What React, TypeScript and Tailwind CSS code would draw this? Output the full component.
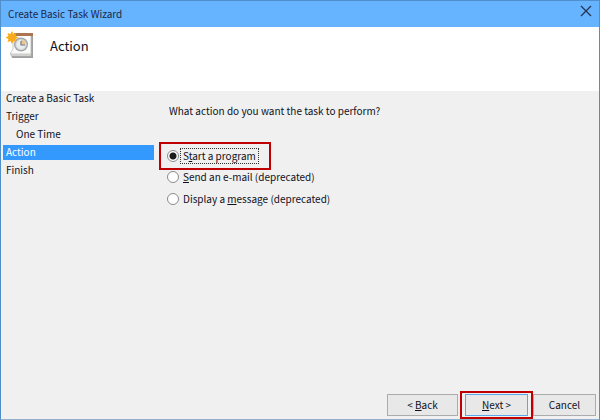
import { useState } from "react";

const steps = [
  { label: "Create a Basic Task", indent: false },
  { label: "Trigger", indent: false },
  { label: "One Time", indent: true },
  { label: "Action", indent: false },
  { label: "Finish", indent: false },
];

const actions = [
  { id: "program", before: "S", key: "t", after: "art a program" },
  { id: "email", before: "", key: "S", after: "end an e-mail (deprecated)" },
  { id: "message", before: "Display a ", key: "m", after: "essage (deprecated)" },
];

function TaskIcon() {
  return (
    <svg width="28" height="28" viewBox="0 0 28 28" aria-hidden="true">
      <path d="M5 23h22v4H6z" fill="#a0a09e" />
      <path d="M25 5h2v22h-2z" fill="#a0a09e" />
      <path d="M5 22h20v3H5z" fill="#dededc" stroke="#b4b4b2" strokeWidth="0.6" />
      <path d="M7 4h18v19H4l3-5z" fill="#fbfbfa" stroke="#bcbcba" strokeWidth="0.8" />
      <path d="M8 2h19v3H8z" fill="#ad7450" />
      <circle cx="15" cy="13.5" r="7" fill="#a2a6a8" />
      <circle cx="15" cy="13.5" r="5.2" fill="#e9edf0" stroke="#d0d4d6" />
      <path d="M15 13.5V8.500a5 5 0 0 1 4.500 6z" fill="#e8c88f" />
      <path d="M15 10v4h4" fill="none" stroke="#777b80" strokeWidth="1.2" />
      <path
        d="M6 0l1.500 3L10.500 2 9.600 5l2.900 1.500L9.600 8l0.900 3-3-1L6 13l-1.500-3-3 1 0.900-3L-0.500 6.500 2.400 5 1.500 2l3 1z"
        fill="#f9ab1b"
      />
    </svg>
  );
}

export default function App() {
  const [selected, setSelected] = useState("program");
  return (
    <div className="flex min-h-screen flex-col border border-[#4f8fcb] border-b-[#8fb0d0] bg-[#f0f0f0] font-['Noto_Sans_CJK_SC','Open_Sans',sans-serif] text-[10px] leading-[18px] text-[#10101c]">
      <header className="flex h-[26px] items-center justify-between bg-[#66b3ff] px-[7px] text-[#1c2844]">
        <h1>Create Basic Task Wizard</h1>
        <button type="button" aria-label="Close" className="pb-[7px]">
          <svg width="12" height="12" viewBox="0 0 12 12" fill="none" stroke="#26344f" strokeWidth="1.3">
            <path d="M1 1l10 10M11 1L1 11" />
          </svg>
        </button>
      </header>

      <div className="flex h-16 items-start gap-4 bg-white pt-1 pl-[5px]">
        <TaskIcon />
        <h2 className="pt-[5px] text-[13px] leading-5">Action</h2>
      </div>

      <main className="flex grow">
        <ol className="flex w-[153px] shrink-0 flex-col gap-[3px] pl-0.5">
          {steps.map((s) => (
            <li
              key={s.label}
              className={
                (s.label === "Action" ? "bg-[#3399ff] text-white " : "") +
                (s.indent ? "pl-[13px] " : "pl-[3px] ") +
                "h-[15px] leading-[14px]"
              }
            >
              {s.label}
            </li>
          ))}
        </ol>
        <fieldset className="min-w-0 grow pt-[11px] pl-[5px]">
          <legend className="float-left w-full pb-[22px] pl-[10px]">
            What action do you want the task to perform?
          </legend>
          <div className="clear-both flex flex-col items-start">
            {actions.map((a) => (
              <div
                key={a.id}
                className={
                  a.id === "program"
                    ? "-mb-1 flex h-7 items-center border-2 border-[#c00000] pr-[10px] pl-1.5"
                    : "flex h-[22px] items-center pl-2"
                }
              >
                <label className="flex items-center gap-px">
                  <input
                    type="radio"
                    name="action"
                    checked={selected === a.id}
                    onChange={() => setSelected(a.id)}
                    className="m-0 size-3 appearance-none rounded-full border border-[#8a8a8a] bg-white checked:bg-[radial-gradient(circle,#1c1c1c_3px,#ffffff_4px)]"
                  />
                  <span
                    className={
                      (selected === a.id ? "border-[#303030] " : "border-transparent ") +
                      "block border border-dotted px-0.5 leading-[14px]"
                    }
                  >
                    {a.before}
                    <u className="underline-offset-1">{a.key}</u>
                    {a.after}
                  </span>
                </label>
              </div>
            ))}
          </div>
        </fieldset>
      </main>

      <footer className="flex items-end justify-end pr-[3px]">
        <button type="button" className="mb-[3px] h-[22px] w-[71px] border border-[#acacac] bg-[#e8e8e8] leading-5">
          &lt; <u className="underline-offset-1">B</u>ack
        </button>
        <div className="ml-0.5 flex border-2 border-[#c00000] px-0.5 pt-px pb-px">
          <button type="button" className="mx-px h-[22px] w-[63px] border border-[#5ba7ee] bg-[#e8e8e8] leading-5">
            <u className="underline-offset-1">N</u>ext &gt;
          </button>
        </div>
        <button type="button" className="mb-[3px] h-[22px] w-[63px] border border-[#acacac] bg-[#e8e8e8] leading-5">
          Cancel
        </button>
      </footer>
    </div>
  );
}
